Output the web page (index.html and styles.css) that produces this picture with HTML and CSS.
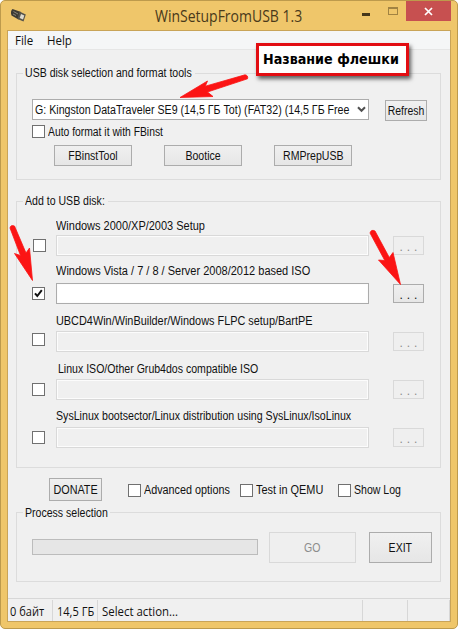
FILE: index.html
```
<!DOCTYPE html>
<html lang="ru">
<head>
<meta charset="utf-8">
<title>WinSetupFromUSB 1.3</title>
<link rel="stylesheet" href="styles.css">
</head>
<body>
<div class="window">
  <header class="titlebar">
    <svg class="app-icon" viewBox="0 0 18 16" width="18" height="16">
      <path d="M2.500 2 L11 5 L8.500 12.500 L1.500 8.500 Q0 4 2.500 2Z" fill="#3d3b34"/>
      <path d="M9.500 4.500 L15.800 7.500 L13.500 14.500 L7.500 12Z" fill="#55534b"/>
      <path d="M11 7 L14.300 8.500 L13 12.500 L9.700 11Z" fill="#dedacf"/>
      <path d="M3.500 4.500 L8 7 M3 7 L6 8.500" stroke="#8a867a" fill="none"/>
    </svg>
    <h1 class="title"><span class="t">WinSetupFromUSB 1.3</span></h1>
    <div class="controls">
      <i class="min"></i>
      <i class="max"></i>
      <span class="close"><svg width="9" height="9" viewBox="0 0 9 9"><path d="M1 1 L8 8 M8 1 L1 8" stroke="#fff" stroke-width="1.700"/></svg></span>
    </div>
  </header>
  <main class="client">
    <nav class="menu"><span class="t">File</span><span class="t">Help</span></nav>

    <section class="group tools">
      <h2 class="legend lg-tools"><span class="t">USB disk selection and format tools</span></h2>
      <div class="disk-row">
        <div class="combo"><span class="t">G: Kingston DataTraveler SE9 (14,5 ГБ Tot) (FAT32) (14,5 ГБ Free</span>
          <svg width="9" height="7" viewBox="0 0 9 7"><path d="M1 1.200 L4.500 4.800 L8 1.200" fill="none" stroke="#505050" stroke-width="2"/></svg>
        </div>
        <button class="btn refresh"><span class="t">Refresh</span></button>
      </div>
      <label class="check auto"><i class="box"></i><span class="t">Auto format it with FBinst</span></label>
      <div class="tool-row">
        <button class="btn"><span class="t">FBinstTool</span></button>
        <button class="btn"><span class="t">Bootice</span></button>
        <button class="btn"><span class="t">RMPrepUSB</span></button>
      </div>
    </section>

    <section class="group sources">
      <h2 class="legend lg-add"><span class="t">Add to USB disk:</span></h2>
      <div class="source s1"><i class="box"></i><p><span class="t">Windows 2000/XP/2003 Setup</span></p><div class="field"></div><button class="btn browse" disabled>. . .</button></div>
      <div class="source s2"><i class="box"><svg width="11" height="11" viewBox="0 0 11 11"><path d="M2 5.300 L4.300 8 L8.800 2.200" fill="none" stroke="#111" stroke-width="2"/></svg></i><p><span class="t">Windows Vista / 7 / 8 / Server 2008/2012 based ISO</span></p><div class="field active"></div><button class="btn browse">. . .</button></div>
      <div class="source s3"><i class="box"></i><p><span class="t">UBCD4Win/WinBuilder/Windows FLPC setup/BartPE</span></p><div class="field"></div><button class="btn browse" disabled>. . .</button></div>
      <div class="source s4"><i class="box"></i><p><span class="t">Linux ISO/Other Grub4dos compatible ISO</span></p><div class="field"></div><button class="btn browse" disabled>. . .</button></div>
      <div class="source s5"><i class="box"></i><p><span class="t">SysLinux bootsector/Linux distribution using SysLinux/IsoLinux</span></p><div class="field"></div><button class="btn browse" disabled>. . .</button></div>
    </section>

    <div class="options">
      <button class="btn donate"><span class="t">DONATE</span></button>
      <label class="check adv"><i class="box"></i><span class="t">Advanced options</span></label>
      <label class="check qemu"><i class="box"></i><span class="t">Test in QEMU</span></label>
      <label class="check log"><i class="box"></i><span class="t">Show Log</span></label>
    </div>

    <section class="group process">
      <h2 class="legend lg-proc"><span class="t">Process selection</span></h2>
      <div class="process-row">
        <div class="progress"></div>
        <button class="btn go" disabled><span class="t">GO</span></button>
        <button class="btn exit"><span class="t">EXIT</span></button>
      </div>
    </section>

    <footer class="status">
      <span><b class="t">0 байт</b></span><span><b class="t">14,5 ГБ</b></span><span class="action"><b class="t">Select action...</b></span><span></span><span></span>
    </footer>
  </main>
  <div class="callout"><b class="t">Название флешки</b></div>
  <svg class="arrows" width="458" height="629" viewBox="0 0 458 629">
    <g fill="#fb1414" stroke="#fb1414" stroke-width=".8" stroke-linejoin="round">
      <path d="M180 97.500 L207.500 81 L205.300 86.200 L245 74.800 Q248.500 75.500 247.500 78.800 L207.500 92 L213 96.500Z"/>
      <path d="M32.500 280.500 L14.500 253.500 L20.500 255.500 L10 228 Q10.500 224.500 14.500 226 L26 253 L29.500 248Z"/>
      <path d="M400.500 284.500 L378.500 260 L384.800 260.500 L370 233 Q371 229 375 231 L389.300 257.500 L393 252.500Z"/>
    </g>
  </svg>
</div>
</body>
</html>
```
FILE: styles.css
```
* { box-sizing: border-box; margin: 0; padding: 0; }
body { width: 458px; height: 629px; overflow: hidden; background: #fff; font: 12px/14px "Liberation Sans", sans-serif; color: #111; }
h1, h2 { font: inherit; }
i { display: block; flex: none; }
.t { display: inline-block; white-space: nowrap; font-weight: normal; transform: scaleX(var(--sx, .88)); transform-origin: 0 50%; }

.window { position: relative; width: 458px; height: 629px; padding: 0 7px 7px; background: #efc66a; border: 1px solid #bd9a4c; border-radius: 5px; }
.titlebar { display: flex; height: 29px; position: relative; }
.app-icon { margin: 6px 0 0 2px; }
.title { width: 148px; margin: 4px 0 0 127px; font: 16px/22px "Open Sans", sans-serif; color: #49391a; --sx: .874; }
.controls { display: flex; flex: 1; margin-right: -1px; justify-content: flex-end; }
.min { width: 8px; height: 3px; margin: 12px 18px 0 0; background: #46371a; }
.max { width: 10px; height: 8px; margin: 6px 8px 0 0; border: 1px solid #a18342; border-top-width: 2px; }
.close { display: flex; align-items: center; justify-content: center; width: 45px; height: 20px; background: #c75050; }

.client { display: flex; flex-direction: column; height: 592px; margin: 0 -1px; background: #f0f0f0; border: 1px solid #c9a458; }
.menu { display: flex; gap: 13px; height: 19px; padding: 0 7px; background: #f5f6f7; border-bottom: 1px solid #e6e6e6; font: 12px/19px "Open Sans", sans-serif; --sx: .96; }

.group { margin: 0 9px 0 8px; border: 1px solid #dcdcdc; padding: 0 15px; }
.legend { width: 172px; height: 14px; margin: -8px 0 0 -9px; padding-left: 2px; background: #f0f0f0; }
.tools { height: 107px; margin-top: 23px; }
.sources { height: 267px; margin-top: 21px; }
.process { height: 70px; margin-top: 10px; }
.lg-add { width: 85px; }
.lg-proc { width: 87px; line-height: 16px; --sx: .88; }

.btn { display: flex; align-items: center; justify-content: center; flex: none; font: inherit; color: #111; border: 1px solid #acacac; background: linear-gradient(#f0f0f0, #e6e6e6); }
.btn .t { transform-origin: 50% 50%; }
.btn:disabled { color: #8c8c8c; border-color: #d9d9d9; background: #efefef; }
.box { width: 13px; height: 13px; border: 1px solid #707070; background: #fff; }
.box svg { display: block; }
.check { display: flex; gap: 3px; align-items: center; }

.disk-row { display: flex; gap: 16px; width: 396px; margin-top: 19px; }
.combo { display: flex; align-items: center; flex: none; width: 337px; height: 21px; padding-left: 2px; overflow: hidden; border: 1px solid #acacac; background: #fff; --sx: .886; }
.combo .t { width: 322px; flex: none; }
.refresh { width: 42px; height: 21px; margin-top: 1px; --sx: .87; }
.auto { margin-top: 4px; height: 13px; --sx: .862; }
.tool-row { display: flex; gap: 32px; margin: 7px 0 0 22px; }
.tool-row .btn { width: 78px; height: 21px; }

.source { display: grid; grid-template: 27px 21px / 24px 313px 31px; column-gap: 0; }
.source p { grid-area: 1 / 2; align-self: start; margin-top: var(--label, 10px); }
.source .box { grid-area: 2 / 1; margin-top: 4px; }
.source .field { grid-area: 2 / 2; border: 1px solid #d9d9d9; box-shadow: inset 0 0 0 1px #fcfcfc; }
.source .field.active { border-color: #acacac; background: #fff; }
.source .browse { grid-area: 2 / 3; width: 31px; height: 19px; margin: 1px 0 0 24px; padding-top: 2px; letter-spacing: .3px; }
.s1 { --label: 11px; --sx: .915; }
.s1 .box { margin-left: 1px; }
.s2 { --label: 8px; --sx: .917; }
.s3 { --sx: .907; }
.s3 .box { margin-top: 2px; }
.s4 p { padding-left: 2px; }
.s5 { --label: 9px; --sx: .885; }

.options { display: flex; height: 34px; padding: 10px 0 0 41px; }
.donate { width: 53px; height: 23px; --sx: .9; }
.check.adv { width: 112px; margin-left: 26px; --sx: .9; }
.check.qemu { width: 98px; --sx: .91; }

.process-row { display: flex; width: 401px; margin-top: 13px; }
.progress { flex: none; width: 226px; height: 16px; margin-top: 7px; border: 1px solid #bcbcbc; background: #e6e6e6; }
.go { width: 87px; height: 31px; margin-left: 11px; }
.exit { width: 63px; height: 31px; margin-left: 13px; }

.status { display: grid; grid-template-columns: 45px 45px 265px 45px 42px; height: 23px; margin-top: auto; padding-top: 1px; border-top: 1px solid #d7d7d7; font: 12px/23px "Open Sans", sans-serif; --sx: .92; }
.status span { height: 21px; padding-left: 4px; border-right: 1px solid #d7d7d7; }
.status span:first-child { padding-left: 2px; }
.status .action { --sx: .95; }

.callout { position: absolute; left: 255px; top: 42px; width: 153px; height: 33px; padding-left: 4px; border: 3px solid #e20d12; background: #fff; box-shadow: 2px 3px 4px rgba(0, 0, 0, .6); font: bold 14px/26px "DejaVu Sans", sans-serif; color: #000; --sx: .91; }
.callout .t { font-weight: bold; }
.arrows { position: absolute; left: -1px; top: -1px; pointer-events: none; }
```
